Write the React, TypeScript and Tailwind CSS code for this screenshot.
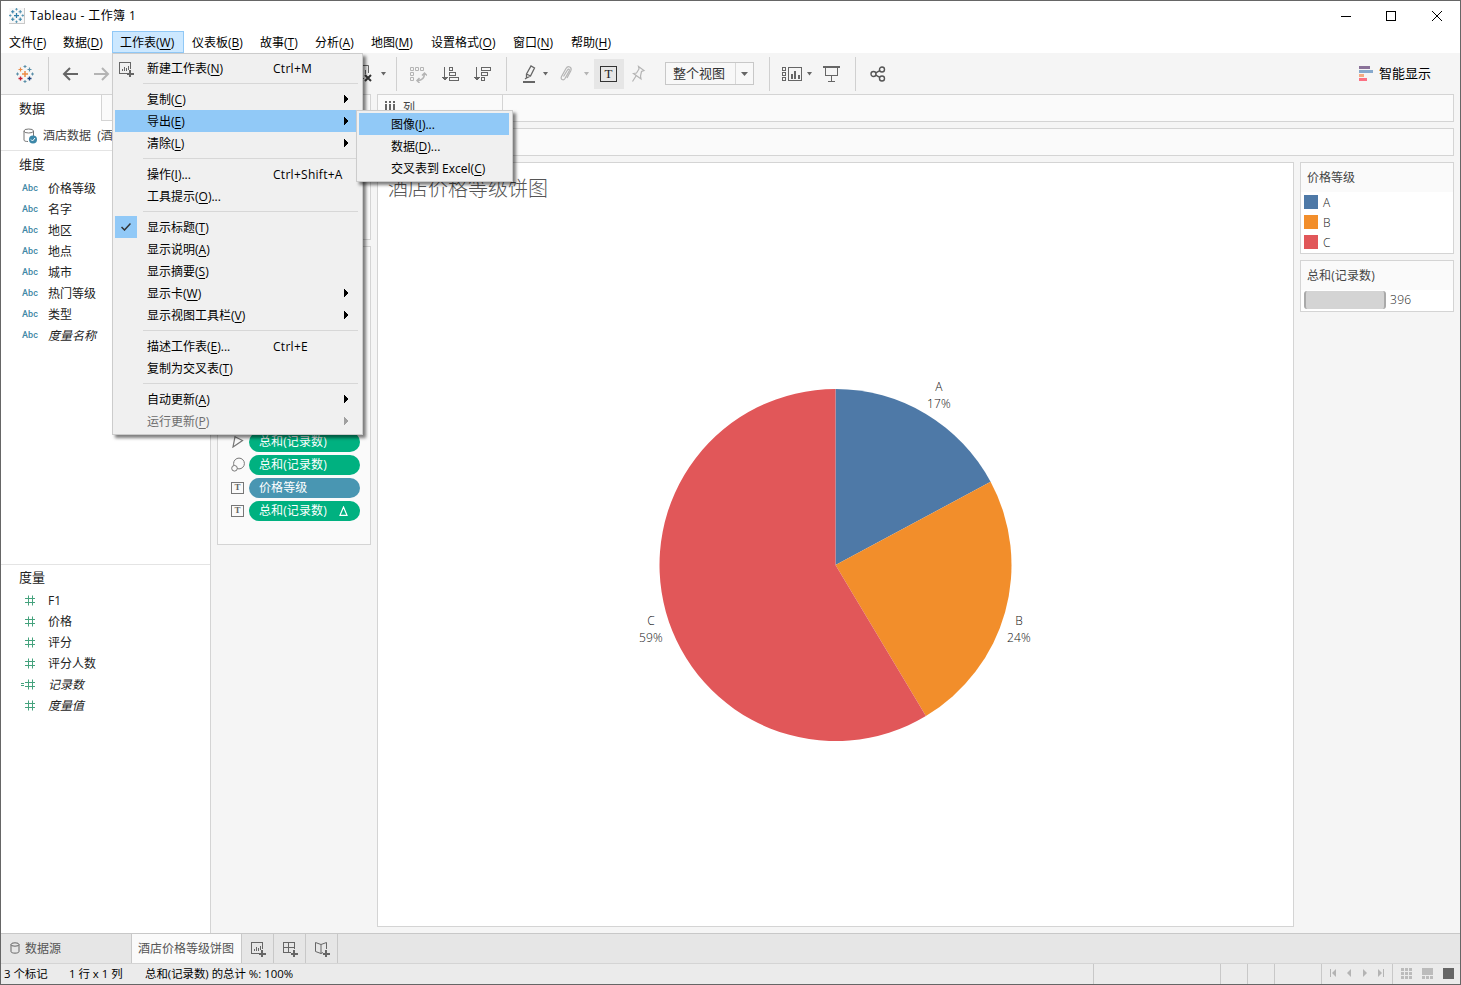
import type { ReactNode } from "react";
import clsx from "clsx";

const FONT = "font-['Open_Sans','Noto_Sans_CJK_SC',sans-serif]";

type MenuEntry = {
  label: string;
  key?: string;
  suffix?: string;
  shortcut?: string;
  arrow?: boolean;
  active?: boolean;
  checked?: boolean;
  disabled?: boolean;
  icon?: ReactNode;
};

const menuBar = [
  { label: "文件", key: "F", width: "w-[54px]" },
  { label: "数据", key: "D", width: "w-[57px]" },
  { label: "工作表", key: "W", width: "w-[72px]", open: true },
  { label: "仪表板", key: "B", width: "w-[68px]" },
  { label: "故事", key: "T", width: "w-[55px]" },
  { label: "分析", key: "A", width: "w-[56px]" },
  { label: "地图", key: "M", width: "w-[60px]" },
  { label: "设置格式", key: "O", width: "w-[82px]" },
  { label: "窗口", key: "N", width: "w-[58px]" },
  { label: "帮助", key: "H", width: "w-[58px]" },
];

const worksheetMenu: MenuEntry[][] = [
  [{ label: "新建工作表", key: "N", shortcut: "Ctrl+M", icon: <NewSheetIcon /> }],
  [
    { label: "复制", key: "C", arrow: true },
    { label: "导出", key: "E", arrow: true, active: true },
    { label: "清除", key: "L", arrow: true },
  ],
  [
    { label: "操作", key: "I", suffix: "...", shortcut: "Ctrl+Shift+A" },
    { label: "工具提示", key: "O", suffix: "..." },
  ],
  [
    { label: "显示标题", key: "T", checked: true },
    { label: "显示说明", key: "A" },
    { label: "显示摘要", key: "S" },
    { label: "显示卡", key: "W", arrow: true },
    { label: "显示视图工具栏", key: "V", arrow: true },
  ],
  [
    { label: "描述工作表", key: "E", suffix: "...", shortcut: "Ctrl+E" },
    { label: "复制为交叉表", key: "T" },
  ],
  [
    { label: "自动更新", key: "A", arrow: true },
    { label: "运行更新", key: "P", arrow: true, disabled: true },
  ],
];

const exportMenu: MenuEntry[] = [
  { label: "图像", key: "I", suffix: "...", active: true },
  { label: "数据", key: "D", suffix: "..." },
  { label: "交叉表到 Excel", key: "C" },
];

const dimensions = ["价格等级", "名字", "地区", "地点", "城市", "热门等级", "类型"];
const measures = ["F1", "价格", "评分", "评分人数"];

const slices = [
  { name: "A", percent: 17, start: 0, end: 61.8, color: "#4e79a7" },
  { name: "B", percent: 24, start: 61.8, end: 149.1, color: "#f28e2b" },
  { name: "C", percent: 59, start: 149.1, end: 360, color: "#e15759" },
];

function Label({ label, mnemonic, suffix }: { label: string; mnemonic?: string; suffix?: string }) {
  return (
    <span className="whitespace-pre">
      {label}
      {mnemonic && (
        <>
          (<span className="underline underline-offset-2">{mnemonic}</span>)
        </>
      )}
      {suffix}
    </span>
  );
}

function NewSheetIcon() {
  return (
    <svg width="16" height="16" viewBox="0 0 16 16" fill="none" stroke="#666" shapeRendering="crispEdges">
      <path d="M8 11.5H.5V.5h11V7M3.5 9V6.500M5.500 9V4.500M7.500 9V5.500M9.500 8V3.500" />
      <path d="M11 8v7M7.500 11.500h7" strokeWidth="2" />
    </svg>
  );
}

function NewDashboardIcon() {
  return (
    <svg width="16" height="16" viewBox="0 0 16 16" fill="none" stroke="#666" shapeRendering="crispEdges">
      <path d="M8 10.500H.5V.5h11V7M.5 5.500h11M5.500 .5v10" />
      <path d="M11 8v7M7.500 11.500h7" strokeWidth="2" />
    </svg>
  );
}

function NewStoryIcon() {
  return (
    <svg width="16" height="16" viewBox="0 0 16 16" fill="none" stroke="#666">
      <path d="M8 10.500L6 11.500L.5 9.500V.5L6 2.500L11.500 .5V7M6 2.500v9" />
      <path d="M11 8v7M7.500 11.500h7" strokeWidth="2" shapeRendering="crispEdges" />
    </svg>
  );
}

function Logo({ size, colors }: { size: number; colors: string[] }) {
  const [top, center, left, right] = colors;
  return (
    <svg width={size} height={size} viewBox="0 0 18 18" fill="none">
      <path d="M9 6v6M6 9h6" stroke={center} strokeWidth="1.500" />
      <path d="M9 0v3M7.500 1.500h3M9 15v3M7.500 16.500h3M0 9h3M1.500 7.500v3M15 9h3M16.500 7.500v3" stroke={top} />
      <path d="M4.500 2.500v4M2.500 4.500h4" stroke={center} strokeWidth="1.200" />
      <path d="M13.500 2.500v4M11.500 4.500h4" stroke={top} strokeWidth="1.200" />
      <path d="M4.500 11.500v4M2.500 13.500h4" stroke={left} strokeWidth="1.300" />
      <path d="M13.500 11.500v4M11.500 13.500h4" stroke={right} strokeWidth="1.300" />
    </svg>
  );
}

function Caret({ className }: { className?: string }) {
  return (
    <svg width="5" height="4" viewBox="0 0 5 4" className={clsx("shrink-0", className)} fill="currentColor">
      <path d="M0 0h5L2.500 3.500z" />
    </svg>
  );
}

function Separator({ className }: { className?: string }) {
  return <div className={clsx("h-[34px] w-px shrink-0 bg-[#d0d0d0]", className)} />;
}

function TitleBar() {
  return (
    <header className="flex h-[30px] items-center bg-white pl-2">
      <div className="flex size-4 items-center justify-center border-r border-b border-[#c8c8c8] bg-[#f8f8f8]">
        <Logo size={15} colors={["#4c8fae", "#2f7ea8", "#3b85a8", "#3b85a8"]} />
      </div>
      <h1 className="ml-[5px] text-[12px] tracking-[0.38px] text-black">Tableau - 工作簿 1</h1>
      <svg width="102" height="12" viewBox="0 0 102 12" className="mr-[17px] mb-px ml-auto" fill="none" stroke="#000">
        <path d="M0 6.500h10M45.500 1.500h9v9h-9z" shapeRendering="crispEdges" />
        <path d="M91 1l10 10M101 1l-10 10" />
      </svg>
    </header>
  );
}

function MenuBar() {
  return (
    <nav className="flex h-[22px] bg-white text-[12px] leading-6 text-black">
      {menuBar.map((m) => (
        <div
          key={m.label}
          className={clsx(
            "shrink-0 whitespace-nowrap",
            m.width,
            m.open ? "border border-[#90c8f6] bg-[#cce8ff] pl-[7px] leading-[22px]" : "pl-2"
          )}
        >
          <Label label={m.label} mnemonic={m.key} />
        </div>
      ))}
    </nav>
  );
}

function Toolbar() {
  return (
    <div className="flex h-[41px] items-center bg-[#f5f5f5] text-[#666]">
      <div className="ml-[15px]">
        <Logo size={18} colors={["#5b8fa8", "#eb8a44", "#c72035", "#1f447e"]} />
      </div>
      <Separator className="ml-[14px]" />
      <svg width="16" height="14" viewBox="0 0 16 14" className="ml-[13px]" fill="none" stroke="#666" strokeWidth="2">
        <path d="M8 1L2 7l6 6M2 7h14" />
      </svg>
      <svg width="16" height="14" viewBox="0 0 16 14" className="ml-4" fill="none" stroke="#b4b4b4" strokeWidth="2">
        <path d="M8 1l6 6l-6 6M14 7H0" />
      </svg>
      <svg width="18" height="18" viewBox="0 0 18 18" className="ml-[246px]" fill="none" stroke="#666">
        <path d="M8 13.500H2.500V.5h10V8M9.500 5v4" />
        <path d="M9 10l6 6M15 10l-6 6" stroke="#333" strokeWidth="2" />
      </svg>
      <Caret className="ml-[7px]" />
      <Separator className="ml-[10px]" />
      <svg width="18" height="18" viewBox="0 0 18 18" className="ml-[12px]" fill="none" stroke="#b4b4b4">
        <path d="M1.500 2.500h3v3h-3zM6.500 2.500h3v3h-3zM11.500 2.500h3v3h-3zM1.500 7.500h3v3h-3zM1.500 12.500h3v3h-3z" />
        <path d="M15.500 8c0 5-3 7.500-7 7.500M13 10.500L15.500 8l2.500 2.500M10.500 13L8 15.500l2.500 2.500" strokeWidth="1.500" />
      </svg>
      <svg width="19" height="18" viewBox="0 0 19 18" className="ml-[14px]" fill="none" stroke="#666" shapeRendering="crispEdges">
        <path d="M3.500 2v13M.5 12.500h6M1.500 13.500h4M2.500 14.500h2" />
        <path d="M8.500 2.500h3v3h-3zM8.500 7.500h6v3h-6zM8.500 12.500h9v3h-9z" />
      </svg>
      <svg width="19" height="18" viewBox="0 0 19 18" className="ml-[13px]" fill="none" stroke="#666" shapeRendering="crispEdges">
        <path d="M3.500 2v13M.5 12.500h6M1.500 13.500h4M2.500 14.500h2" />
        <path d="M8.500 2.500h9v3h-9zM8.500 7.500h6v3h-6zM8.500 12.500h3v3h-3z" />
      </svg>
      <Separator className="ml-[14px]" />
      <svg width="15" height="20" viewBox="0 0 15 20" className="ml-[16px]" fill="none" stroke="#666">
        <path d="M3.500 10L8 2l3.500 2L7.500 12L3.500 14zM3.500 10l4 2M3.500 14l-1.500 1" strokeWidth="1.300" />
        <path d="M0 18h12" strokeWidth="2" />
      </svg>
      <Caret className="ml-[5px]" />
      <svg width="14" height="18" viewBox="0 0 14 18" className="ml-[11px]" fill="none" stroke="#b4b4b4" strokeWidth="1.200">
        <path d="M4.500 11.500L8.500 5c1-1.500 2.500-.5 1.700 1L6 13.500c-1.500 2.500-5 .8-3.500-2L7 3.500c2-3.500 6.500-1.500 4.700 2.500L8 13" />
      </svg>
      <Caret className="ml-[11px] text-[#b4b4b4]" />
      <div className="ml-[5px] flex h-[30px] w-[30px] items-center justify-center bg-[#e6e6e6]">
        <div className="mr-px flex h-4 w-[17px] items-center justify-center border border-[#333] font-['Liberation_Serif',serif] text-[13px] leading-none text-[#222]">
          T
        </div>
      </div>
      <svg width="16" height="18" viewBox="0 0 16 18" className="ml-[6px]" fill="none" stroke="#b4b4b4" strokeWidth="1.200">
        <path d="M8.500 1.500l5.500 4l-2.500 1l-1 4.500l.5 3l-7.500-5.500l3-.5L9 4zM6 11L2.500 16.500" />
      </svg>
      <div className="ml-[19px] flex h-[23px] w-[89px] items-center border border-[#c8c8c8] bg-[#f8f8f8]">
        <span className="w-[69px] pl-[7px] text-[13px] text-[#333]">整个视图</span>
        <span className="flex h-full flex-1 items-center justify-center border-l border-[#d8d8d8]">
          <svg width="7" height="4" viewBox="0 0 7 4" fill="#666">
            <path d="M0 0h7L3.500 4z" />
          </svg>
        </span>
      </div>
      <Separator className="ml-[15px]" />
      <svg width="22" height="16" viewBox="0 0 22 16" className="ml-[12px]" fill="none" stroke="#666" shapeRendering="crispEdges">
        <path d="M.5 1.500h3v3h-3zM.5 6.500h3v3h-3zM.5 11.500h3v3h-3zM6.500 1.500h13v13h-13z" />
        <path d="M10 13V8M13 13V5M16.500 13V9" strokeWidth="2" />
      </svg>
      <Caret className="ml-[3px]" />
      <svg width="18" height="17" viewBox="0 0 18 17" className="ml-[11px]" fill="none" stroke="#666" shapeRendering="crispEdges">
        <path d="M0 2h17" strokeWidth="2" />
        <path d="M2.500 2v8.500h12V2M8.500 10v6M5 16.500h7" />
      </svg>
      <Separator className="ml-[14px]" />
      <svg width="16" height="16" viewBox="0 0 16 16" className="ml-[14px]" fill="none" stroke="#555" strokeWidth="1.400">
        <circle cx="3.500" cy="8" r="2.500" />
        <circle cx="12" cy="3.500" r="2.500" />
        <circle cx="12" cy="12.500" r="2.500" />
        <path d="M5.800 6.800l4-2.200M5.800 9.200l4 2.200" />
      </svg>
      <svg width="14" height="16" viewBox="0 0 14 16" className="ml-auto">
        <path d="M0 0h11v3H0z" fill="#8a7299" />
        <path d="M0 4h14v3H0z" fill="#86a9cd" />
        <path d="M0 8h5v3H0z" fill="#f4ab82" />
        <path d="M0 12h8v3H0z" fill="#fc7183" />
      </svg>
      <span className="mr-[29px] ml-[6px] text-[13px] text-black">智能显示</span>
    </div>
  );
}

function MenuRow({ entry }: { entry: MenuEntry }) {
  return (
    <div
      className={clsx(
        "mx-[2px] flex h-[22px] items-center",
        entry.active && "bg-[#91c9f7]",
        entry.disabled ? "text-[#6d6d6d]" : "text-black"
      )}
    >
      <span className={clsx("flex size-[22px] items-center justify-center", entry.checked && "bg-[#91c9f7]")}>
        {entry.checked && (
          <svg width="10" height="8" viewBox="0 0 10 8" fill="none" stroke="#333" strokeWidth="1.500">
            <path d="M.5 4l3 3l6-6.500" />
          </svg>
        )}
        {entry.icon && <span className="mt-[3px] ml-px">{entry.icon}</span>}
      </span>
      <span className="ml-[10px] w-[126px] pt-[2px] whitespace-nowrap">
        <Label label={entry.label} mnemonic={entry.key} suffix={entry.suffix} />
      </span>
      <span className="w-[71px] pt-px whitespace-nowrap tracking-[0.28px]">{entry.shortcut}</span>
      {entry.arrow && (
        <svg
          width="4"
          height="8"
          viewBox="0 0 4 8"
          fill={entry.disabled ? "#a0a0a0" : "#000"}
          shapeRendering="crispEdges"
          className="mb-px"
        >
          <path d="M0 0l4 4l-4 4z" />
        </svg>
      )}
    </div>
  );
}

function WorksheetMenu() {
  return (
    <div className="absolute top-[52px] left-[111px] z-10 w-[251px] border border-[#ccc] bg-[#f0f0f0] pt-[3px] pb-[2px] text-[12px] leading-[22px] shadow-[3px_3px_3px_rgba(0,0,0,0.5)]">
      {worksheetMenu.map((group, i) => (
        <div key={i}>
          {i > 0 && <div className="mt-1 mr-1 mb-1 ml-[30px] h-px bg-[#d7d7d7]" />}
          {group.map((entry) => (
            <MenuRow key={entry.label} entry={entry} />
          ))}
        </div>
      ))}
    </div>
  );
}

function ExportMenu() {
  return (
    <div className="absolute top-[109px] left-[355px] z-20 w-[157px] border border-[#ccc] bg-[#f0f0f0] py-[2px] text-[12px] leading-6 text-black shadow-[3px_3px_3px_rgba(0,0,0,0.5)]">
      {exportMenu.map((entry) => (
        <div key={entry.label} className={clsx("mr-[3px] ml-[2px] h-[22px] pl-8", entry.active && "bg-[#91c9f7]")}>
          <Label label={entry.label} mnemonic={entry.key} suffix={entry.suffix} />
        </div>
      ))}
    </div>
  );
}

function DimensionRow({ name, italic }: { name: string; italic?: boolean }) {
  return (
    <li className="flex h-[21px] items-center">
      <span className="w-[27px] pt-px pl-px font-['Roboto',sans-serif] text-[9px] font-medium tracking-[0.15px] text-[#3f88a5]">
        Abc
      </span>
      <span className={clsx(italic && "italic")}>{name}</span>
    </li>
  );
}

function MeasureRow({ name, italic, calculated }: { name: string; italic?: boolean; calculated?: boolean }) {
  return (
    <li className="flex h-[21px] items-center">
      <svg width="14" height="11" viewBox="0 0 14 11" className="mr-[13px]" fill="none" stroke="#45a27d">
        <path d="M4 3.500h10M4 7.500h10M7.500 .5v10M11.500 .5v10" />
        {calculated && <path d="M0 4.500h3M0 6.500h3" />}
      </svg>
      <span className={clsx(italic && "italic")}>{name}</span>
    </li>
  );
}

function DataPane() {
  return (
    <aside className="flex w-[210px] shrink-0 flex-col border-r border-[#d4d4d4] bg-white text-[12px] text-[#222]">
      <div className="flex h-[27px] border-t border-[#d4d4d4] text-[13px]">
        <div className="w-[100px] pl-[18px] leading-[26px]">数据</div>
        <div className="flex-1 border-b border-l border-[#d4d4d4] bg-[#fafafa]" />
      </div>
      <div className="flex h-[30px] items-center border-b border-[#e4e4e4] pl-[22px] text-[#444]">
        <svg width="14" height="16" viewBox="0 0 14 16" fill="none" stroke="#777">
          <path d="M5 13.500C2.500 13.500 1 13 1 12V3M10.500 3v5" />
          <ellipse cx="5.700" cy="3" rx="4.800" ry="2" />
          <circle cx="10" cy="11.500" r="4" fill="#3c87a8" stroke="none" />
          <path d="M8 11.500l1.500 1.500l2.500-3" stroke="#fff" />
        </svg>
        <span className="ml-[6px] w-[70px] overflow-hidden whitespace-nowrap">
          酒店数据&nbsp; (酒
        </span>
      </div>
      <section className="h-[414px] border-b border-[#e4e4e4]">
        <h2 className="h-[27px] pl-[18px] text-[13px] leading-[27px]">维度</h2>
        <ul className="pl-5">
          {dimensions.map((name) => (
            <DimensionRow key={name} name={name} />
          ))}
          <DimensionRow name="度量名称" italic />
        </ul>
      </section>
      <section>
        <h2 className="h-[25px] pl-[18px] text-[13px] leading-[24px]">度量</h2>
        <ul className="pl-5">
          {measures.map((name) => (
            <MeasureRow key={name} name={name} />
          ))}
          <MeasureRow name="记录数" italic calculated />
          <MeasureRow name="度量值" italic />
        </ul>
      </section>
    </aside>
  );
}

function Pill({ icon, label, blue, delta }: { icon: ReactNode; label: string; blue?: boolean; delta?: boolean }) {
  return (
    <div className="flex h-[23px] items-center">
      <span className="flex w-[13px] justify-center">{icon}</span>
      <span
        className={clsx(
          "ml-[5px] flex h-5 w-[111px] items-center justify-between rounded-full pr-3 pl-[10px] text-[12px] tracking-[0.1px] text-white",
          blue ? "bg-[#4996b2]" : "bg-[#00b180]"
        )}
      >
        {label}
        {delta && (
          <svg width="9" height="10" viewBox="0 0 9 10" fill="none" stroke="#fff" strokeWidth="1.200">
            <path d="M4.500 1L8 9.300H1z" />
          </svg>
        )}
      </span>
    </div>
  );
}

function TextMark() {
  return (
    <span className="flex h-3 w-[13px] shrink-0 items-center justify-center border border-[#777] font-['Liberation_Serif',serif] text-[9px] leading-none font-bold text-[#666]">
      T
    </span>
  );
}

function MarksColumn() {
  return (
    <div className="flex w-[166px] shrink-0 flex-col gap-[6px] px-[6px]">
      <div className="h-[146px] border border-[#d4d4d4] bg-[#fafafa]" />
      <div className="flex h-[299px] flex-col justify-end border border-[#d4d4d4] bg-[#fafafa] pb-[22px] pl-[13px]">
        <Pill
          label="总和(记录数)"
          icon={
            <svg width="13" height="12" viewBox="0 0 13 12" fill="none" stroke="#777" strokeWidth="1.200">
              <path d="M4 .8L11.500 4.500L2 11z" />
            </svg>
          }
        />
        <Pill
          label="总和(记录数)"
          icon={
            <svg width="14" height="15" viewBox="0 0 14 15" fill="none" stroke="#777" className="shrink-0">
              <circle cx="8" cy="6.500" r="5.400" />
              <circle cx="3.500" cy="11.300" r="2.800" fill="#fafafa" />
            </svg>
          }
        />
        <Pill label="价格等级" blue icon={<TextMark />} />
        <Pill label="总和(记录数)" delta icon={<TextMark />} />
      </div>
    </div>
  );
}

const CX = 175.5;
const CY = 176;
const R = 176;

function slicePath(start: number, end: number) {
  const point = (deg: number) => {
    const a = (deg * Math.PI) / 180;
    return `${CX + R * Math.sin(a)} ${CY - R * Math.cos(a)}`;
  };
  return `M${CX} ${CY}L${point(start)}A${R} ${R} 0 ${end - start > 180 ? 1 : 0} 1 ${point(end)}Z`;
}

function MarkLabel({ name, percent, className }: { name: string; percent: number; className: string }) {
  return (
    <div
      className={clsx(
        "absolute w-10 text-center text-[12px] leading-[17px] font-light tracking-[0.2px] text-[#111]",
        className
      )}
    >
      {name}
      <br />
      {percent}%
    </div>
  );
}

function PieView() {
  return (
    <section className="flex w-[917px] flex-col border border-[#d4d4d4] bg-white">
      <h2 className="h-[226px] pt-[12px] pl-[10px] text-[20px] leading-[28px] font-light text-[#555]">酒店价格等级饼图</h2>
      <div className="relative ml-[282px] w-[352px]">
        <svg width="352" height="352" viewBox="0 0 352 352" className="overflow-visible">
          {slices.map((s) => (
            <path key={s.name} d={slicePath(s.start, s.end)} fill={s.color} />
          ))}
        </svg>
        <MarkLabel name="A" percent={17} className="top-[-11px] left-[259px]" />
        <MarkLabel name="B" percent={24} className="top-[223px] left-[339px]" />
        <MarkLabel name="C" percent={59} className="top-[223px] left-[-29px]" />
      </div>
    </section>
  );
}

function Legends() {
  return (
    <aside className="flex w-[154px] flex-col gap-[6px] text-[12px] text-[#444]">
      <div className="h-[92px] border border-[#d4d4d4] bg-white">
        <h3 className="h-[29px] bg-[#fafafa] pl-[6px] leading-[29px]">价格等级</h3>
        {slices.map((s) => (
          <div key={s.name} className="flex h-5 items-center pl-[3px]">
            <span className="size-[14px]" style={{ backgroundColor: s.color }} />
            <span className="ml-[5px] pt-px font-light text-[#222]">{s.name}</span>
          </div>
        ))}
      </div>
      <div className="h-[52px] border border-[#d4d4d4] bg-white">
        <h3 className="h-[29px] bg-[#fafafa] pl-[6px] leading-[29px] tracking-[0.1px]">总和(记录数)</h3>
        <div className="flex h-[20px] items-center pl-[3px]">
          <span className="h-[18px] w-[82px] rounded-[3px] border-x-2 border-[#aaa] bg-[#d4d4d4]" />
          <span className="ml-1 font-light tracking-[0.3px] text-[#222]">396</span>
        </div>
      </div>
    </aside>
  );
}

function Worksheet() {
  return (
    <main className="flex flex-1 flex-col gap-[6px] text-[12px] text-[#444]">
      <div className="flex h-7 w-[1077px] border border-[#d4d4d4] bg-[#fafafa]">
        <div className="flex w-[125px] items-center border-r border-[#d4d4d4] pl-[7px]">
          <svg width="11" height="12" viewBox="0 0 11 12" fill="#666" className="mb-1">
            <path d="M0 1h2v2H0zM4 1h2v2H4zM8 1h2v2H8zM0 4h2v7H0zM4 4h2v7H4zM8 4h2v7H8z" />
          </svg>
          <span className="ml-[7px]">列</span>
        </div>
      </div>
      <div className="flex h-7 w-[1077px] border border-[#d4d4d4] bg-[#fafafa]">
        <div className="w-[125px] border-r border-[#d4d4d4]" />
      </div>
      <div className="flex h-[765px] gap-[6px]">
        <PieView />
        <Legends />
      </div>
    </main>
  );
}

function SheetTabs() {
  return (
    <div className="flex h-[30px] border-t border-[#c8c8c8] bg-[#e6e6e6] text-[12px] text-[#555]">
      <div className="flex w-[131px] items-center border-r border-[#c8c8c8] pl-[9px]">
        <svg width="10" height="12" viewBox="0 0 10 12" fill="none" stroke="#666" className="mb-[2px]">
          <ellipse cx="5" cy="2.500" rx="4" ry="1.700" />
          <path d="M1 2.500v7c0 2.200 8 2.200 8 0v-7" />
        </svg>
        <span className="ml-[5px]">数据源</span>
      </div>
      <div className="flex w-[110px] items-center border-r border-[#c8c8c8] bg-[#fafafa] pl-[6px] whitespace-nowrap">
        酒店价格等级饼图
      </div>
      <div className="flex w-8 items-center justify-center border-r border-[#c8c8c8] pt-[2px] pl-[2px]">
        <NewSheetIcon />
      </div>
      <div className="flex w-8 items-center justify-center border-r border-[#c8c8c8] pt-[2px] pl-[2px]">
        <NewDashboardIcon />
      </div>
      <div className="flex w-8 items-center justify-center border-r border-[#c8c8c8] pt-[2px] pl-[2px]">
        <NewStoryIcon />
      </div>
    </div>
  );
}

function StatusBar() {
  return (
    <footer className="flex h-[21px] border-t border-[#d4d4d4] bg-[#ebebeb] text-[11.4px] leading-5 text-black">
      <span className="w-[66px] pl-[3px]">3 个标记</span>
      <span className="ml-[2px] w-[76px]">1 行 x 1 列</span>
      <span>总和(记录数) 的总计 %: 100%</span>
      <div className="ml-auto flex">
        <div className="w-[127px] border-l border-[#c8c8c8]" />
        <div className="w-[27px] border-l border-[#c8c8c8]" />
        <div className="w-[27px] border-l border-[#c8c8c8]" />
        <div className="w-[47px] border-l border-[#c8c8c8]" />
        <div className="flex w-[71px] items-center border-l border-[#c8c8c8] pb-[2px] pl-2">
          <svg width="55" height="8" viewBox="0 0 55 8" fill="#b4b4b4">
            <path d="M0 0h1v8H0zM6 0v8L2 4zM21 0v8L17 4zM33 0v8l4-4zM48 0v8l4-4zM53 0h1v8h-1z" />
          </svg>
        </div>
        <div className="flex w-[68px] items-center border-l border-[#c8c8c8] pb-px pl-2">
          <svg width="53" height="11" viewBox="0 0 53 11" fill="#bbb" shapeRendering="crispEdges">
            <path d="M0 0h3v3H0zM4 0h3v3H4zM8 0h3v3H8zM0 4h3v3H0zM4 4h3v3H4zM8 4h3v3H8zM0 8h3v3H0zM4 8h3v3H4zM8 8h3v3H8z" />
            <path d="M21 0h11v7H21zM21 8h3v3h-3zM25 8h3v3h-3zM29 8h3v3h-3z" />
            <path d="M42 0h11v11H42z" fill="#666" />
          </svg>
        </div>
      </div>
    </footer>
  );
}

export default function App() {
  return (
    <div className={clsx("relative flex h-[985px] w-[1461px] flex-col overflow-hidden border border-[#666] bg-[#f5f5f5]", FONT)}>
      <TitleBar />
      <MenuBar />
      <Toolbar />
      <div className="flex h-[839px]">
        <DataPane />
        <MarksColumn />
        <Worksheet />
      </div>
      <SheetTabs />
      <StatusBar />
      <WorksheetMenu />
      <ExportMenu />
    </div>
  );
}
